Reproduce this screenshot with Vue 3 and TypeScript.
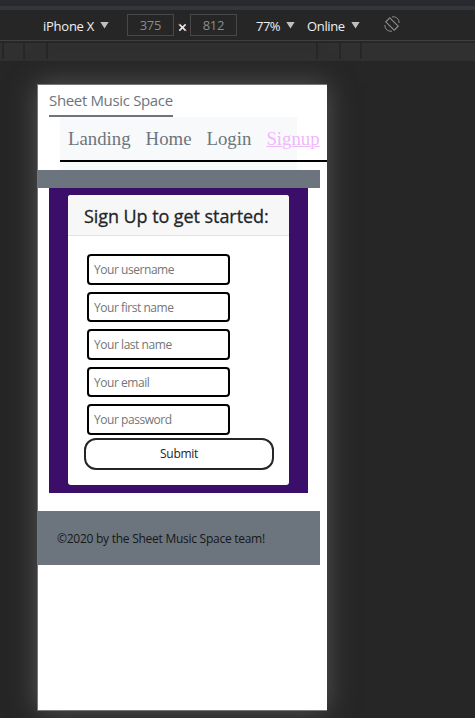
<script setup lang="ts">
const links: string[] = ['Landing', 'Home', 'Login']
const fields: string[] = ['username', 'first name', 'last name', 'email', 'password']
</script>

<template>
  <div class="devtools">
    <div class="tabs"></div>
    <div class="toolbar">
      <span class="device">iPhone X</span><i class="arrow"></i>
      <span class="dim w">375</span>
      <svg class="times" viewBox="0 0 10 10"><path d="M1.5 1.5 8.5 8.5M8.5 1.5 1.5 8.5" stroke="#e4e9ee" stroke-width="1.8" /><path d="M0 1.5h2M8.5 8.5h1.5" stroke="#b45548" stroke-width="1" /></svg>
      <span class="dim">812</span>
      <span class="zoom">77%</span><i class="arrow"></i>
      <span class="online">Online</span><i class="arrow"></i>
      <svg class="rotate" viewBox="0 0 16 16" fill="none" stroke="#8b8b8b">
        <path d="M5.8 1.8 14.2 10.2 10.2 14.2 1.8 5.8Z" stroke-width="1.2" />
        <path d="M8 .8h2.2q4.8 1 5 6.2M8 15.2H5.8Q1 14.2.8 9" stroke-width="1" />
      </svg>
    </div>
    <div class="ruler"><i class="a"></i><i class="b"></i><i class="c"></i><i class="d"></i><i class="e"></i><i class="f"></i></div>
    <main class="stage">
      <div class="screen">
        <header>
          <a class="brand"><span>Sheet Music Space</span></a>
          <div class="navbox">
            <nav>
              <a v-for="l in links" :key="l">{{ l }}</a>
              <a class="active">Signup</a>
            </nav>
          </div>
        </header>
        <div class="band"></div>
        <section class="purple">
          <div class="card">
            <h1><span>Sign Up to get started:</span></h1>
            <form @submit.prevent>
              <input v-for="f in fields" :key="f" :placeholder="'Your ' + f" />
              <button type="submit">Submit</button>
            </form>
          </div>
        </section>
        <footer>©2020 by the Sheet Music Space team!</footer>
      </div>
    </main>
  </div>
</template>

<style>
body { background: #262626; overflow: hidden; }
</style>
<style scoped>
* { box-sizing: border-box; }
.devtools { height: 718px; overflow: hidden; background: #262626; font-family: "Open Sans", "Noto Sans", sans-serif; white-space: nowrap; }
.tabs { height: 10px; background: #292a2f; border-bottom: 4px solid #35363b; }
.toolbar { height: 31px; display: flex; align-items: center; padding: 2px 0 0 43px; border-bottom: 1px solid #404040; color: #f0f0f0; font-size: 13px; line-height: 18px; }
.toolbar span, .toolbar svg, .toolbar i { flex: none; }
.device { width: 52px; letter-spacing: -.25px; }
.arrow { width: 9px; height: 7px; background: #bfbfbf; clip-path: polygon(0 0, 100% 0, 50% 100%); margin: -2px 0 0 5px; }
.dim { width: 47px; height: 22px; border: 1px solid #484848; color: #8b8b8b; text-align: center; line-height: 21px; margin-top: -2px; letter-spacing: -.2px; }
.dim.w { margin-left: 18px; }
.times { width: 9px; height: 9px; margin: 2px 3px 0 4px; }
.zoom { width: 25px; margin-left: 19px; letter-spacing: -.5px; }
.online { width: 39px; margin-left: 12px; letter-spacing: -.35px; }
.rotate { width: 16px; height: 16px; margin: -4px 0 0 24px; }
.ruler { height: 20px; padding-top: 2px; display: flex; background: linear-gradient(#262626 2px, #303030 2px); }
.ruler i { width: 2px; height: 16px; background: #262626; flex: none; }
.a { margin-left: 2px; } .b { margin-left: 19px; } .c { margin-left: 21px; } .d { margin-left: 268px; } .e { margin-left: 21px; } .f { margin-left: 19px; }
.stage { padding: 23px 0 0 37px; }
.screen { width: 290px; height: 627px; background: #fff; border: solid #777; border-width: 1px 0 1px 1px; box-shadow: 0 0 26px #555; }
header { height: 85px; }
.brand { display: block; width: 124px; height: 32px; margin-left: 11px; border-bottom: 2px solid #6c757d; color: #6c757d; font-size: 15px; line-height: 31px; letter-spacing: -.34px; }
.navbox { width: 237px; height: 53px; margin-left: 22px; background: #f8f9fa; }
nav { width: 267px; height: 45px; display: flex; gap: 15px; padding-left: 8px; border-bottom: 2px solid #000; font: 18.8px/43px "Liberation Serif", serif; color: #6c757d; }
nav .active { color: #efb8fa; text-decoration: underline; text-decoration-thickness: 1px; }
.band { width: 281.5px; height: 18px; background: #6c757d; }
.purple { width: 259px; height: 305px; margin-left: 11px; padding: 7px 19px 8px; background: #3b0f69; }
.card { height: 290px; background: #fff; border-radius: 3px; overflow: hidden; }
h1 { height: 41px; margin: 0; padding-left: 16px; background: #f7f7f7; border-bottom: 1px solid #e2e2e2; font-size: 18px; line-height: 43px; font-weight: 500; color: #212529; letter-spacing: -.07px; -webkit-text-stroke: .3px #212529; }
form { padding: 18px 15px 0 16px; display: flex; flex-direction: column; }
input { width: 143px; height: 30.5px; margin: 0 0 7px 3px; padding: 1px 4px 0 5px; border: 2px solid #000; border-radius: 4px; background: #fff; font: 12px "Open Sans", sans-serif; letter-spacing: -.45px; outline: none; }
input::placeholder { color: #757575; }
button { height: 32px; margin-top: -4px; padding: 0; border: 2px solid #23272b; border-radius: 12px; background: #fff; color: #212529; font: 12px "Open Sans", sans-serif; letter-spacing: -.3px; }
footer { width: 281.5px; height: 54px; margin-top: 18px; padding: 1px 0 0 19px; background: #6c757d; color: #151719; font-size: 12px; line-height: 54px; letter-spacing: -.26px; }
</style>
